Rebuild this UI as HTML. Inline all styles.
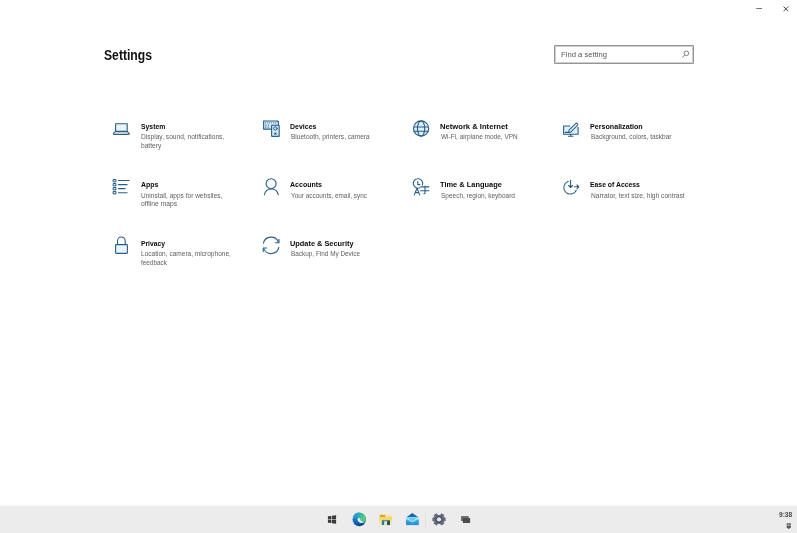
<!DOCTYPE html>
<html><head><meta charset="utf-8">
<style>
html,body{margin:0;padding:0;}
body{width:797px;height:533px;overflow:hidden;position:relative;background:#fff;font-family:"Liberation Sans",sans-serif;}
.t{position:absolute;white-space:nowrap;transform-origin:0 0;filter:grayscale(1);}
.ov{position:absolute;left:0;top:0;}
#search{position:absolute;left:554px;top:45px;width:138px;height:16.5px;border:1px solid #959595;box-shadow:inset 0 0 0 1px #cdcdcd;border-radius:1px;background:#fff;}
#tb{position:absolute;left:0;top:506px;width:797px;height:27px;background:#ececec;}
#tbsh{position:absolute;left:0;top:503px;width:797px;height:3px;background:linear-gradient(#fff,#f6f6f6);}
</style></head><body>
<div id="search"></div>
<div id="tbsh"></div>
<div id="tb"></div>
<div class="t" style="left:140.6px;top:121.83px;font-size:8.0px;line-height:9.6px;color:#0a0a0a;font-weight:700;transform:scaleX(0.8538)">System</div>
<div class="t" style="left:140.9px;top:133.15px;font-size:6.5px;line-height:7.8px;color:#606060;font-weight:400;transform:scaleX(1.0159)">Display, sound, notifications,</div>
<div class="t" style="left:140.9px;top:141.85px;font-size:6.5px;line-height:7.8px;color:#606060;font-weight:400;transform:scaleX(1.0165)">battery</div>
<div class="t" style="left:290.4px;top:121.83px;font-size:8.0px;line-height:9.6px;color:#0a0a0a;font-weight:700;transform:scaleX(0.8728)">Devices</div>
<div class="t" style="left:290.7px;top:133.15px;font-size:6.5px;line-height:7.8px;color:#606060;font-weight:400;transform:scaleX(1.0072)">Bluetooth, printers, camera</div>
<div class="t" style="left:440.4px;top:121.83px;font-size:8.0px;line-height:9.6px;color:#0a0a0a;font-weight:700;transform:scaleX(0.9533)">Network &amp; Internet</div>
<div class="t" style="left:440.7px;top:133.15px;font-size:6.5px;line-height:7.8px;color:#606060;font-weight:400;transform:scaleX(0.9969)">Wi-Fi, airplane mode, VPN</div>
<div class="t" style="left:590.4px;top:121.83px;font-size:8.0px;line-height:9.6px;color:#0a0a0a;font-weight:700;transform:scaleX(0.8913)">Personalization</div>
<div class="t" style="left:590.6999999999999px;top:133.15px;font-size:6.5px;line-height:7.8px;color:#606060;font-weight:400;transform:scaleX(0.9991)">Background, colors, taskbar</div>
<div class="t" style="left:140.6px;top:180.23px;font-size:8.0px;line-height:9.6px;color:#0a0a0a;font-weight:700;transform:scaleX(0.8700)">Apps</div>
<div class="t" style="left:140.9px;top:191.55px;font-size:6.5px;line-height:7.8px;color:#606060;font-weight:400;transform:scaleX(1.0058)">Uninstall, apps for websites,</div>
<div class="t" style="left:140.9px;top:200.25px;font-size:6.5px;line-height:7.8px;color:#606060;font-weight:400;transform:scaleX(1.0364)">offline maps</div>
<div class="t" style="left:290.4px;top:180.23px;font-size:8.0px;line-height:9.6px;color:#0a0a0a;font-weight:700;transform:scaleX(0.8779)">Accounts</div>
<div class="t" style="left:290.7px;top:191.55px;font-size:6.5px;line-height:7.8px;color:#606060;font-weight:400;transform:scaleX(0.9860)">Your accounts, email, sync</div>
<div class="t" style="left:440.4px;top:180.23px;font-size:8.0px;line-height:9.6px;color:#0a0a0a;font-weight:700;transform:scaleX(0.9289)">Time &amp; Language</div>
<div class="t" style="left:440.7px;top:191.55px;font-size:6.5px;line-height:7.8px;color:#606060;font-weight:400;transform:scaleX(0.9976)">Speech, region, keyboard</div>
<div class="t" style="left:590.4px;top:180.23px;font-size:8.0px;line-height:9.6px;color:#0a0a0a;font-weight:700;transform:scaleX(0.8543)">Ease of Access</div>
<div class="t" style="left:590.6999999999999px;top:191.55px;font-size:6.5px;line-height:7.8px;color:#606060;font-weight:400;transform:scaleX(1.0211)">Narrator, text size, high contrast</div>
<div class="t" style="left:140.6px;top:238.63px;font-size:8.0px;line-height:9.6px;color:#0a0a0a;font-weight:700;transform:scaleX(0.8430)">Privacy</div>
<div class="t" style="left:140.9px;top:249.95px;font-size:6.5px;line-height:7.8px;color:#606060;font-weight:400;transform:scaleX(1.0074)">Location, camera, microphone,</div>
<div class="t" style="left:140.9px;top:258.65px;font-size:6.5px;line-height:7.8px;color:#606060;font-weight:400;transform:scaleX(0.9818)">feedback</div>
<div class="t" style="left:290.4px;top:238.63px;font-size:8.0px;line-height:9.6px;color:#0a0a0a;font-weight:700;transform:scaleX(0.9215)">Update &amp; Security</div>
<div class="t" style="left:290.7px;top:249.95px;font-size:6.5px;line-height:7.8px;color:#606060;font-weight:400;transform:scaleX(0.9846)">Backup, Find My Device</div>
<div class="t" style="left:104px;top:47.74px;font-size:13.8px;line-height:16.56px;color:#111;font-weight:700;transform:scaleX(0.8817)">Settings</div>
<div class="t" style="left:560.8px;top:49.92px;font-size:7.8px;line-height:9.36px;color:#555;font-weight:400;transform:scaleX(0.9823)">Find a setting</div>
<div class="t" style="left:778.8px;top:510.77px;font-size:7px;line-height:8.4px;color:#4a4a4a;font-weight:700;transform:scaleX(0.9421)">9:38</div>
<svg class="ov" width="797" height="533" viewBox="0 0 797 533">
<g fill="none" stroke="#2a5d85" stroke-width="1.1" stroke-linejoin="round" stroke-linecap="round">
 <!-- System laptop -->
 <rect x="115.6" y="123.8" width="11.6" height="7.6" fill="#e8f5fc"/>
 <path d="M115.4 131.6 L113.4 133.4 Q113.2 134.4 114.3 134.4 L128.4 134.4 Q129.4 134.4 129.2 133.4 L127.3 131.6 Z" fill="#f2f9fd"/>
 <!-- Devices -->
 <path d="M263.6 121 H277.6 L278.4 121.8 V129.1 H263.6 Z" fill="#cfe8f7"/>
 <path d="M276.8 120.9 L278.6 122.7 V120.9 Z" fill="#2a5d85" stroke="none"/>
 <path d="M265 122.9 H276" stroke-width="0.8" stroke-dasharray="1 1" stroke-linecap="butt"/>
 <path d="M265 125.2 H266.4 M267.6 125.2 H269 M265 127.2 H266.4 M267.6 127.2 H269" stroke-width="0.8" stroke-linecap="butt"/>
 <rect x="271.6" y="125.3" width="7.6" height="11.1" rx="0.5" fill="#cfe8f7"/>
 <circle cx="275.4" cy="128.4" r="1.7" stroke-width="1"/>
 <rect x="274.2" y="132.7" width="2.3" height="1.9" fill="#2a5d85" stroke="none"/>
 <!-- Network globe -->
 <circle cx="421.1" cy="128.5" r="7.6" fill="#dcf0fb"/>
 <ellipse cx="421.1" cy="128.5" rx="3.6" ry="7.6"/>
 <path d="M414 127 H428.2 M414 131.2 H428.2"/>
 <!-- Personalization -->
 <path d="M569.8 126 H563.6 V134.2 H578.1 V127.2" fill="#dcf0fb"/>
 <path d="M570.7 134.4 V136 M568.4 136.3 H573"/>
 <path d="M565.2 132.4 H569.4"/>
 <g transform="translate(573.4,127.6) rotate(-45)">
  <rect x="-6" y="-1.3" width="11.6" height="2.6" rx="1.2" fill="#e6f4fb" stroke-width="1"/>
 </g>
 <!-- Apps -->
 <g stroke-width="1">
 <rect x="113.5" y="179.5" width="2.4" height="2.4" fill="#cfe8f6"/><rect x="113.5" y="183.5" width="2.4" height="2.4" fill="#cfe8f6"/>
 <rect x="113.5" y="187.5" width="2.4" height="2.4" fill="#cfe8f6"/><rect x="113.5" y="191.5" width="2.4" height="2.4" fill="#cfe8f6"/>
 </g>
 <path d="M118.4 180.5 H129.2 M118.4 184.6 H127.1 M118.4 188.6 H125.1 M118.4 192.7 H127.1"/>
 <!-- Accounts -->
 <circle cx="271.1" cy="183.7" r="5" fill="#f2fafe"/>
 <path d="M264.4 194.7 A7.1 7.1 0 0 1 278.3 194.7"/>
 <!-- Time & Language -->
 <path d="M419.8 187.8 A4.7 4.7 0 1 1 422.4 185.1"/>
 <path d="M417.8 181.6 V184.6 H419.9"/>
 <g stroke="#2a5f8a">
 <path d="M414.3 194.9 L417 188.2 L419.7 194.9 M415.3 192.6 H418.7"/>
 <path d="M420.8 186.9 H428.8 M420.6 190.8 H429 M425 186 V193.2 L423.9 193.7"/>
 </g>
 <!-- Ease of Access -->
 <path d="M568.2 181.6 A6.4 6.4 0 1 0 576.4 189.6" stroke-dasharray="1.8 1.1"/>
 <path d="M570.6 180.3 V187.3 M568.7 185.5 L570.6 187.5 L572.5 185.5 M574.4 186.8 H578.6 M577 185 L578.8 186.8 L577 188.6"/>
 <!-- Privacy -->
 <path d="M117.5 244.4 V240.9 A3.85 3.85 0 0 1 125.2 240.9 V244.4"/>
 <rect x="115.6" y="244.6" width="11.8" height="8.8" rx="0.6" fill="#e8f5fc"/>
 <!-- Update sync -->
 <path d="M263.4 243.2 A7.9 7.9 0 0 1 278.4 242"/>
 <path d="M279 239.3 L279 242.7 L275.6 242.7"/>
 <path d="M278.8 247.5 A7.9 7.9 0 0 1 263.9 248.9"/>
 <path d="M263.3 251.4 L263.3 248 L266.7 248"/>
</g>
<!-- search magnifier -->
<g fill="none" stroke="#6f6f6f" stroke-width="0.9">
 <circle cx="686.4" cy="53.3" r="2.3"/>
 <path d="M684.8 55 L682.4 57.4"/>
</g>
<!-- window controls -->
<g stroke-width="0.85" fill="none">
 <path d="M756.2 8.5 H762" stroke="#5a5a5a"/>
 <path d="M783.5 6.5 L788.2 11.2 M788.2 6.5 L783.5 11.2" stroke="#2a2a2a"/>
</g>
</svg>
<svg class="ov" width="797" height="533" viewBox="0 0 797 533">
 <defs>
  <linearGradient id="eb" x1="0.1" y1="0.1" x2="0.7" y2="1">
   <stop offset="0" stop-color="#2a8ad2"/><stop offset="0.5" stop-color="#1a6abb"/><stop offset="1" stop-color="#0c3878"/>
  </linearGradient>
  <linearGradient id="eg" x1="0" y1="0" x2="1" y2="0.3">
   <stop offset="0" stop-color="#2a8cd2"/><stop offset="0.45" stop-color="#2aa8c4"/><stop offset="0.8" stop-color="#48c884"/><stop offset="1" stop-color="#58d270"/>
  </linearGradient>
  <linearGradient id="mg" x1="0" y1="0" x2="0" y2="1">
   <stop offset="0" stop-color="#8ee0f8"/><stop offset="0.5" stop-color="#44b4ec"/><stop offset="1" stop-color="#2a8ed8"/>
  </linearGradient>
  <linearGradient id="mf" x1="0" y1="0" x2="0" y2="1">
   <stop offset="0" stop-color="#1b5a92"/><stop offset="1" stop-color="#2170ad"/>
  </linearGradient>
 </defs>
 <!-- windows logo -->
 <g fill="#3a3a3a">
  <path d="M327.9 516.3 L331.3 515.9 V519.2 H327.9 Z"/>
  <path d="M331.9 515.8 L336.1 515.2 V519.2 H331.9 Z"/>
  <path d="M327.9 519.8 H331.3 V523.1 L327.9 522.7 Z"/>
  <path d="M331.9 519.8 H336.1 V523.7 L331.9 523.2 Z"/>
 </g>
 <!-- edge -->
 <circle cx="359.2" cy="519.5" r="6.7" fill="url(#eb)"/>
 <path d="M353.2 516.4 A6.7 6.7 0 0 1 365.9 519.4 Q365.9 522 363.6 522.1 Q361.2 522 360.6 519.8 Q360.1 518 358 517.8 Q356 517.8 353.2 519.2 Z" fill="url(#eg)"/>
 <path d="M357.4 518.5 Q357.3 521.6 360 522.7 Q362.4 523.4 365.1 522.6 Q362.6 522.4 361.3 521.1 Q360.2 519.9 360.3 518.3 Q359 517.5 357.4 518.5 Z" fill="#d8f6fa"/>
 <!-- file explorer -->
 <rect x="379.2" y="514.8" width="12.8" height="10.3" rx="0.4" fill="#fbe7a0"/>
 <rect x="379.2" y="516.6" width="12.8" height="3.8" fill="#f6d56a"/>
 <rect x="379.8" y="514.8" width="5.5" height="2.1" fill="#d6a524"/>
 <path d="M381.8 525.1 V520.2 H390 V525.1 H387.2 V521.4 H384.3 V525.1 Z" fill="#327f8c"/>
 <rect x="384.3" y="521.4" width="2.9" height="3.7" fill="#cfe6e2"/>
 <rect x="387.2" y="520.8" width="2.8" height="4.3" fill="#24564f"/>
 <!-- mail -->
 <path d="M406 517.4 L412.3 513.1 L418.7 517.4 Z" fill="url(#mf)"/>
 <rect x="406" y="517.2" width="12.7" height="7.9" fill="url(#mg)"/>
 <path d="M406 517.4 L412.3 521 L418.7 517.4 L418.7 518.6 L412.3 522.2 L406 518.6 Z" fill="#c8f2fd" opacity="0.8"/>
 <path d="M406 525.1 L406 519.8 L412.3 523.6 L418.7 519.8 V525.1 Z" fill="#2a90d8" opacity="0.6"/>
 <!-- separator -->
 <rect x="425" y="512" width="0.8" height="15" fill="#dedede"/>
 <!-- gear: teeth at 0,60,120.. deg -->
 <g transform="translate(439,519.4) rotate(90)">
  <path fill="#646a79" d="M-1.7 -6.6 H1.7 L2.3 -4.6 L4.3 -5.3 L6.1 -2.3 L4.5 -1.2 V1.2 L6.1 2.3 L4.3 5.3 L2.3 4.6 L1.7 6.6 H-1.7 L-2.3 4.6 L-4.3 5.3 L-6.1 2.3 L-4.5 1.2 V-1.2 L-6.1 -2.3 L-4.3 -5.3 L-2.3 -4.6 Z"/>
  <circle r="2.7" fill="#e2eaf6" stroke="#262c3c" stroke-width="0.9"/>
 </g>
 <!-- task view -->
 <rect x="461" y="516.1" width="7.7" height="4.8" rx="0.5" fill="#6e6e6e"/>
 <rect x="462.8" y="517.9" width="7.3" height="5.1" rx="0.5" fill="#4c4c4c"/>
 <!-- tray icon -->
 <g fill="#575757">
  <path d="M786.6 524 Q786.6 523.3 787.3 523.3 H790.2 Q790.9 523.3 790.9 524 V525.4 H786.6 Z"/>
  <path d="M786.6 526.1 H790.9 V527.4 L788.75 528.9 L786.6 527.4 Z"/>
 </g>
 <rect x="788.2" y="523.9" width="1.1" height="0.9" fill="#cfcfcf"/>
</svg>

</body></html>
